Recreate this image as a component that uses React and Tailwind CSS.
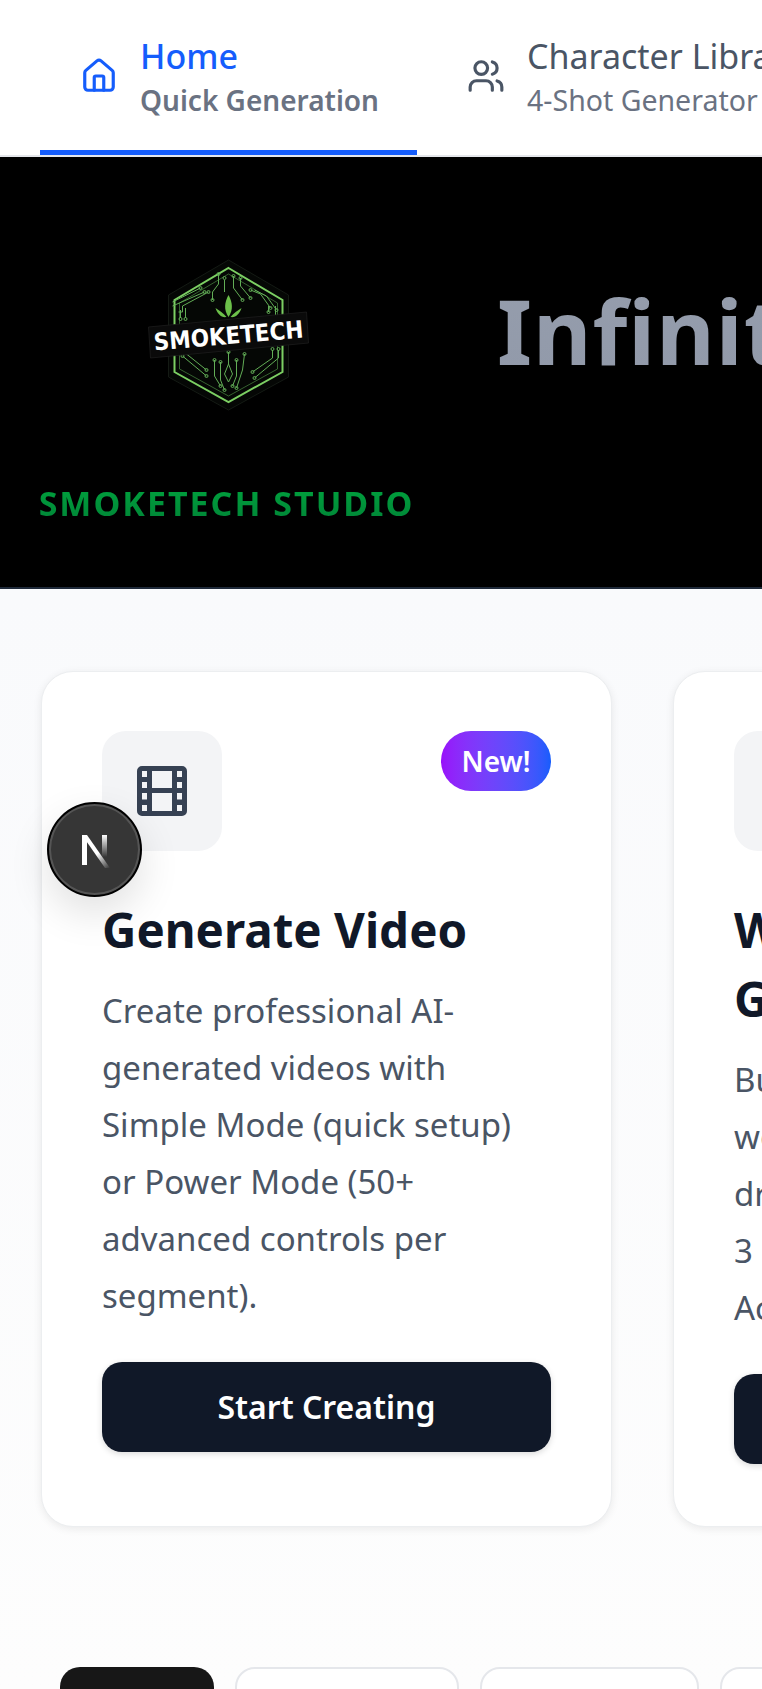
import React from 'react';
import { Home, Users } from 'lucide-react';

const font = { fontFamily: '"Noto Sans", sans-serif' };

const traces = [
  'M52 62 L80 48 M52 66 L84 52 M58 72 L62 72 L62 66 L88 52',
  'M98 34 L98 44 L92 52 L92 60',
  'M104 40 L104 52',
  'M113 36 L113 48 L122 60',
  'M120 38 L120 46 L130 58',
  'M130 50 L140 54 L150 68 M134 50 L146 56 L156 70',
  'M60 78 L60 70 M65 78 L65 68',
  'M155 76 L155 66 M148 72 L148 66',
  'M62 116 L86 136 M66 114 L86 130',
  'M94 120 L94 136 L100 146 M100 122 L100 140 L104 150',
  'M108 112 L108 124 M108 124 L104 134 L108 142 L112 134 L108 124',
  'M116 120 L116 136 L112 146 M124 114 L122 130 L116 148',
  'M158 110 L158 118 L134 138 M152 110 L152 118 L132 132',
];

const dots = [
  [80, 48], [84, 52], [88, 52], [98, 34], [92, 60], [104, 38], [113, 36], [122, 60], [120, 38], [130, 58],
  [130, 50], [150, 68], [156, 70], [60, 79], [65, 79], [155, 78], [148, 72], [62, 116], [86, 136], [86, 130],
  [94, 120], [100, 122], [100, 146], [104, 150], [108, 112], [116, 120], [124, 114], [112, 146], [116, 148],
  [158, 109], [152, 109], [134, 138], [132, 132],
];

const LogoMark = () => (
  <svg width="210" height="180" viewBox="1.500 0 210 180" className="block">
    <polygon points="108,20 168,55 168,137 108,170 48,137 48,55" fill="#050705" stroke="#141a14" strokeWidth="1" />
    <polygon points="108,28 162,60 162,132 108,162 54,132 54,60" fill="none" stroke="#7ccf63" strokeWidth="2" />
    <polygon points="108,34 157,63 157,129 108,156 59,129 59,63" fill="none" stroke="#4a8a42" strokeWidth="0.7" />
    <g fill="none" stroke="#62ad56" strokeWidth="1">
      {traces.map((d) => <path key={d} d={d} />)}
      {dots.map(([cx, cy]) => <circle key={`${cx}-${cy}`} cx={cx} cy={cy} r="1.5" />)}
    </g>
    <path d="M108 55 C104 62 103 70 108 77 C113 70 112 62 108 55Z" fill="#6cc04a" />
    <path d="M95 68 C98 70 103 73 106 77 C101 78 97 74 95 68Z" fill="#6cc04a" />
    <path d="M121 68 C118 70 113 73 110 77 C115 78 119 74 121 68Z" fill="#6cc04a" />
    <polygon points="28,87 186,72 188,103 30,118" fill="#0a0a0a" stroke="#202020" strokeWidth="0.7" />
    <text
      x="108"
      y="104"
      textAnchor="middle"
      transform="rotate(-5 108 95)"
      textLength="150"
      lengthAdjust="spacingAndGlyphs"
      fill="#ffffff"
      fontSize="24"
      fontWeight="700"
      fontFamily='"DejaVu Sans", sans-serif'
    >
      SMOKETECH
    </text>
  </svg>
);

const FilmIcon = () => (
  <svg width="50" height="50" viewBox="0 0 50 50">
    <path
      fillRule="evenodd"
      fill="#364153"
      d="M5 0H45A5 5 0 0 1 50 5V45A5 5 0 0 1 45 50H5A5 5 0 0 1 0 45V5A5 5 0 0 1 5 0Z
         M5 5V11H10V5Z M5 16V22H10V16Z M5 27V33.500H10V27Z M5 39V45H10V39Z
         M40 5V11H45V5Z M40 16V22H45V16Z M40 27V33.500H45V27Z M40 39V45H45V39Z
         M15 5V22H35V5Z M15 27V45H35V27Z"
    />
  </svg>
);

const NavTab = ({ icon: Icon, title, sub, active }) => (
  <div
    className={
      active
        ? 'flex h-[155px] w-[377px] shrink-0 items-center gap-[22px] border-b-[5px] border-[#155dfc] pt-[6px] pl-[40px]'
        : 'flex h-[155px] shrink-0 items-center gap-[22px] border-b-[5px] border-transparent pt-[6px] pl-[40px]'
    }
  >
    <Icon size={38} strokeWidth={2} className={active ? 'mb-[4px] text-[#155dfc]' : 'mb-[4px] text-[#4a5565]'} />
    <div className="flex flex-col">
      <span className={active ? 'text-[34px] leading-[44px] font-medium text-[#155dfc]' : 'text-[34px] leading-[44px] text-[#4a5565]'}>
        {title}
      </span>
      <span className={active ? 'text-[28px] leading-[44px] font-semibold text-[#6a7282]' : 'text-[28.500px] leading-[44px] text-[#6a7282]'}>
        {sub}
      </span>
    </div>
  </div>
);

const Card = ({ title, lines, action, badge, film }) => (
  <div className="h-[856px] w-[571px] shrink-0 rounded-[32px] border border-[#eceef0] bg-white px-[60px] pt-[59px] shadow-[0_2px_8px_rgba(0,0,0,0.08)]">
    <div className="flex items-start justify-between">
      <div className="flex h-[120px] w-[120px] items-center justify-center rounded-[24px] bg-[#f3f4f6]">
        {film && <FilmIcon />}
      </div>
      {badge && (
        <span className="flex h-[60px] w-[110px] items-center justify-center rounded-full bg-gradient-to-r from-[#9810fa] to-[#155dfc] text-[28px] font-semibold text-white">
          {badge}
        </span>
      )}
    </div>
    <h2 className="mt-[44px] text-[47.500px] leading-[69px] font-bold text-[#101828]">{title}</h2>
    <p className="mt-[18px] text-[33px] leading-[57px] text-[#4a5565]">{lines}</p>
    <button className="mt-[38px] h-[90px] w-full rounded-[20px] bg-[#101828] text-[32px] font-semibold text-white shadow-[0_2px_6px_rgba(0,0,0,0.15)]">
      {action}
    </button>
  </div>
);

export default function App() {
  return (
    <div className="relative h-[1689px] w-[762px] overflow-hidden bg-white" style={font}>
      <nav className="flex h-[157px] items-start gap-[10px] border-b-2 border-[#e5e7eb] bg-white pl-[40px]">
        <NavTab icon={Home} title="Home" sub="Quick Generation" active />
        <NavTab icon={Users} title="Character Library" sub="4-Shot Generator" />
      </nav>

      <header className="flex h-[432px] border-b-2 border-[#1e2939] bg-black pl-[40px]">
        <div className="flex w-[373px] shrink-0 flex-col items-center pt-[83px]">
          <LogoMark />
          <span className="mt-[60px] bg-gradient-to-b from-[#00a63e] to-[#008236] bg-clip-text text-[34px] leading-[46px] font-bold tracking-[2px] whitespace-nowrap text-transparent">
            SMOKETECH STUDIO
          </span>
        </div>
        <h1 className="ml-[84px] shrink-0 bg-gradient-to-b from-[#99a1af] to-[#8b93a5] bg-clip-text pt-[111px] text-[90px] leading-[124px] font-bold tracking-[1px] whitespace-nowrap text-transparent">
          Infinite Video
        </h1>
      </header>

      <main className="h-[1100px] bg-gradient-to-b from-[#f9fafc] to-[#fdfdfd] px-[41px] pt-[82px]">
        <div className="flex gap-[61px]">
          <Card
            film
            badge="New!"
            title="Generate Video"
            lines="Create professional AI-generated videos with Simple Mode (quick setup) or Power Mode (50+ advanced controls per segment)."
            action="Start Creating"
          />
          <Card
            title={<>Workflow<br />Generator</>}
            lines={<>Build<br />workflows<br />drag<br />3 steps<br />Actions</>}
            action="Open"
          />
        </div>
        <div className="mt-[140px] ml-[19px] flex gap-[21px]">
          <div className="h-[80px] w-[154px] shrink-0 rounded-[20px] bg-[#171717]" />
          <div className="h-[80px] w-[224px] shrink-0 rounded-[20px] border-2 border-[#e5e7eb] bg-white" />
          <div className="h-[80px] w-[219px] shrink-0 rounded-[20px] border-2 border-[#e5e7eb] bg-white" />
          <div className="h-[80px] w-[219px] shrink-0 rounded-[20px] border-2 border-[#e5e7eb] bg-white" />
        </div>
      </main>

      {/* dev indicator floats over the first card */}
      <div className="absolute top-[802px] left-[47px] flex h-[95px] w-[95px] items-center justify-center rounded-full border-2 border-black bg-[#363636] shadow-[0_0_0_2px_#555555_inset,0_16px_40px_rgba(0,0,0,0.12)]">
        <svg width="40" height="42" viewBox="0 0 40 42" fill="none">
          <defs>
            <linearGradient id="nDiag" x1="8" y1="6" x2="36" y2="38" gradientUnits="userSpaceOnUse">
              <stop offset="0.55" stopColor="#fff" />
              <stop offset="1" stopColor="#fff" stopOpacity="0" />
            </linearGradient>
            <linearGradient id="nRight" x1="30" y1="6" x2="30" y2="28" gradientUnits="userSpaceOnUse">
              <stop stopColor="#fff" />
              <stop offset="1" stopColor="#fff" stopOpacity="0" />
            </linearGradient>
          </defs>
          <rect x="7" y="6" width="5" height="30" fill="#fff" />
          <path d="M7 6H12L35 39H30Z" fill="url(#nDiag)" />
          <rect x="27" y="6" width="5" height="24" fill="url(#nRight)" />
        </svg>
      </div>
    </div>
  );
}
